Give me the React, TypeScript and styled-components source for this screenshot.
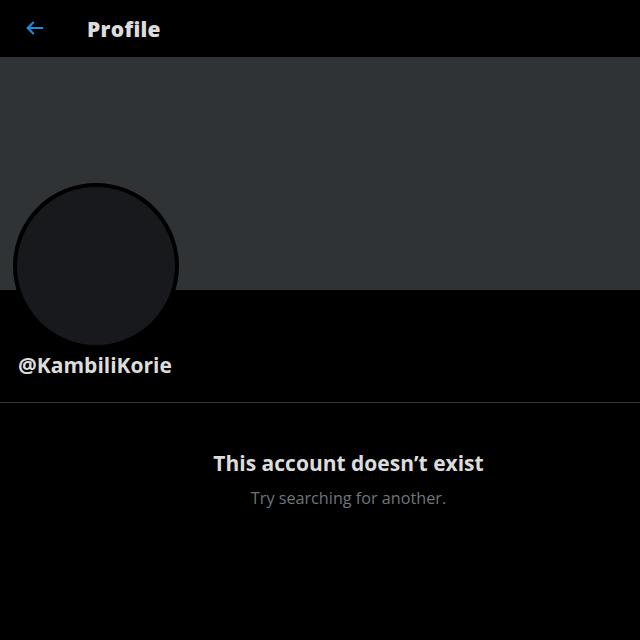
import React from "react";
import styled, { createGlobalStyle } from "styled-components";

const Global = createGlobalStyle`
  html, body { margin: 0; padding: 0; background: #000; }
  body { font-family: "Open Sans", "Noto Sans", sans-serif; color: #d9d9d9; }
`;

const Page = styled.div`
  width: 640px;
  height: 640px;
  background: #000;
  overflow: hidden;
  display: flex;
  flex-direction: column;
`;

const Header = styled.header`
  height: 57px;
  display: flex;
  align-items: center;
  padding-left: 24px;
  gap: 41px;
  box-sizing: border-box;
`;

const BackButton = styled.button`
  background: none;
  border: none;
  padding: 0;
  width: 22px;
  height: 22px;
  display: flex;
  align-items: center;
  justify-content: center;
  color: #1d8ee0;
  margin-top: -2px;
`;

const Title = styled.h1`
  margin: 0;
  font-size: 21px;
  font-weight: 800;
  color: #dcdcdc;
  letter-spacing: 0.3px;
`;

const Banner = styled.div`
  height: 233px;
  background: #2f3336;
`;

const ProfileInfo = styled.div`
  padding: 0 0 0 13px;
  display: flex;
  flex-direction: column;
`;

const Avatar = styled.div`
  width: 158px;
  height: 158px;
  border-radius: 50%;
  background: #17191d;
  border: 4px solid #000;
  margin-top: -107px;
`;

const Handle = styled.div`
  font-size: 21px;
  font-weight: 700;
  color: #dcdcdc;
  margin-top: 2px;
  padding-left: 5px;
  line-height: 28px;
`;

const Divider = styled.hr`
  margin: 23px 0 0;
  border: none;
  border-top: 1px solid #2f3336;
`;

const Message = styled.div`
  padding-left: 57px;
  margin-top: 46px;
  display: flex;
  flex-direction: column;
  align-items: center;
  gap: 11px;
`;

const MessageTitle = styled.div`
  font-size: 21px;
  font-weight: 700;
  color: #dcdcdc;
  line-height: 28px;
`;

const MessageSub = styled.div`
  font-size: 16.2px;
  color: #6e767d;
  line-height: 20px;
`;

export default function App() {
  return (
    <Page>
      <Global />
      <Header>
        <BackButton aria-label="Back">
          <svg width="22" height="22" viewBox="0 0 24 24" fill="none" stroke="currentColor" strokeWidth="2.2" strokeLinecap="round" strokeLinejoin="round">
            <path d="M20 12H4" />
            <path d="M10 6l-6 6 6 6" />
          </svg>
        </BackButton>
        <Title>Profile</Title>
      </Header>
      <Banner />
      <ProfileInfo>
        <Avatar />
        <Handle>@KambiliKorie</Handle>
      </ProfileInfo>
      <Divider />
      <Message>
        <MessageTitle>This account doesn’t exist</MessageTitle>
        <MessageSub>Try searching for another.</MessageSub>
      </Message>
    </Page>
  );
}
